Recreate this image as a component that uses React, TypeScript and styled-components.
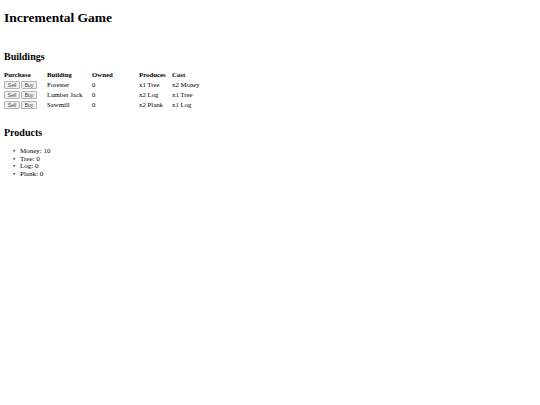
import React from 'react';
import styled, { createGlobalStyle } from 'styled-components';

const GlobalStyle = createGlobalStyle`
    html, body {
        margin: 0;
        padding: 0;
        background: #ffffff;
    }
    body {
        padding: 4px 4px;
        font-family: "Liberation Serif", "Times New Roman", serif;
        font-size: 7px;
        color: #000000;
    }
`;

const Title = styled.h1`
    margin: 6px 0 0;
    font-size: 13.5px;
    line-height: 15px;
    font-weight: bold;
`;

const Message = styled.p`
    margin: 0;
    height: 26px;
`;

const Heading = styled.h2<{ $gap?: number }>`
    margin: ${(p) => p.$gap ?? 0}px 0 7px;
    font-size: 10px;
    line-height: 12px;
    font-weight: bold;
`;

const Table = styled.table`
    border-collapse: separate;
    border-spacing: 0 1px;
    margin: 0;
    font-size: 6.8px;
`;

const HeadCell = styled.th<{ $width?: number }>`
    padding: 0;
    text-align: left;
    font-weight: bold;
    height: 8px;
    line-height: 8px;
    white-space: nowrap;
    width: ${(p) => (p.$width ? `${p.$width}px` : 'auto')};
`;

const Cell = styled.td`
    padding: 0;
    height: 9px;
    line-height: 9px;
    vertical-align: middle;
    white-space: nowrap;
`;

const Actions = styled.div`
    display: flex;
    gap: 1px;
`;

const Button = styled.button`
    box-sizing: border-box;
    width: 16px;
    height: 8px;
    padding: 0;
    margin: 0;
    font-family: "Liberation Sans", Arial, sans-serif;
    font-size: 5px;
    line-height: 6px;
    color: #444444;
    background: #efefef;
    border: 0.5px solid #b4b4b4;
    border-radius: 1px;
`;

const List = styled.ul`
    margin: 9px 0 0;
    padding-left: 9px;
    list-style: none;
    font-size: 7px;
    line-height: 7.6px;
`;

const Item = styled.li`
    &::before {
        content: '•';
        display: inline-block;
        width: 7px;
    }
`;

const buildings = [
    { name: 'Forester', owned: 0, produces: 'x1 Tree', cost: 'x2 Money' },
    { name: 'Lumber Jack', owned: 0, produces: 'x2 Log', cost: 'x1 Tree' },
    { name: 'Sawmill', owned: 0, produces: 'x2 Plank', cost: 'x1 Log' },
];

const products = [
    { name: 'Money', amount: 10 },
    { name: 'Tree', amount: 0 },
    { name: 'Log', amount: 0 },
    { name: 'Plank', amount: 0 },
];

export default function App() {
    return (
        <>
            <GlobalStyle />
            <Title>Incremental Game</Title>
            <Message>&nbsp;</Message>
            <Heading>Buildings</Heading>
            <Table>
                <thead>
                    <tr>
                        <HeadCell $width={43}>Purchase</HeadCell>
                        <HeadCell $width={45}>Building</HeadCell>
                        <HeadCell $width={47}>Owned</HeadCell>
                        <HeadCell $width={33}>Produces</HeadCell>
                        <HeadCell>Cost</HeadCell>
                    </tr>
                </thead>
                <tbody>
                    {buildings.map((b) => (
                        <tr key={b.name}>
                            <Cell>
                                <Actions>
                                    <Button>Sell</Button>
                                    <Button>Buy</Button>
                                </Actions>
                            </Cell>
                            <Cell>{b.name}</Cell>
                            <Cell>{b.owned}</Cell>
                            <Cell>{b.produces}</Cell>
                            <Cell>{b.cost}</Cell>
                        </tr>
                    ))}
                </tbody>
            </Table>
            <Heading $gap={17}>Products</Heading>
            <List>
                {products.map((p) => (
                    <Item key={p.name}>
                        {p.name}: {p.amount}
                    </Item>
                ))}
            </List>
        </>
    );
}
